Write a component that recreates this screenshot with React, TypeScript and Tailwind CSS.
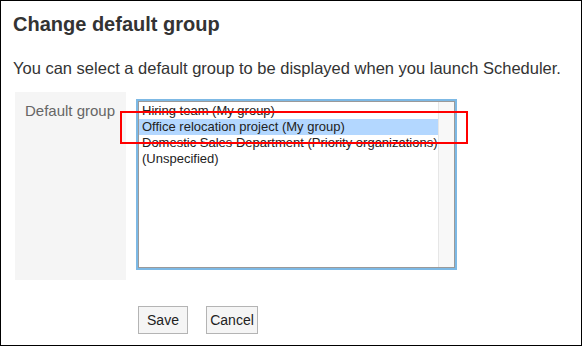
import React from "react";

const groups = [
  "Hiring team (My group)",
  "Office relocation project (My group)",
  "Domestic Sales Department (Priority organizations)",
  "(Unspecified)",
];

export default function App() {
  const selected = 1;

  return (
    <div
      className="relative h-[346px] w-[582px] border border-black bg-white text-[#333]"
      style={{ fontFamily: '"Liberation Sans", Arial, sans-serif' }}
    >
      <h1 className="pl-[12px] pt-[11px] text-[20px] font-bold leading-[24px] text-[#333]">
        Change default group
      </h1>
      <p className="mt-[23px] pl-[12px] text-[16.5px] leading-[18px] text-[#333]">
        You can select a default group to be displayed when you launch Scheduler.
      </p>

      <div className="mt-[15px] flex">
        <div className="ml-[14px] h-[188px] w-[111px] bg-[#f5f5f5] pl-[10px] pt-[10px] text-[15px] leading-[18px] text-[#666]">
          Default group
        </div>
        <div className="ml-[12px] pt-[9px]">
          <div className="flex h-[167px] w-[317px] border border-[#9a9a9a] shadow-[0_0_0_2px_#7db9e5]">
            <ul className="flex-1 pt-[1px] text-[13px] leading-[16px] text-[#222]">
              {groups.map((g, i) => (
                <li
                  key={g}
                  className={`whitespace-nowrap pl-[3px] ${i === selected ? "bg-[#b3d7ff]" : ""}`}
                >
                  {g}
                </li>
              ))}
            </ul>
            <div className="w-[16px] border-l border-[#e6e6e6] bg-[#f8f8f8]" />
          </div>
        </div>
      </div>

      <div className="mt-[26px] flex gap-[18px] pl-[137px]">
        <button
          type="button"
          className="h-[28px] w-[50px] border border-[#b4b4b4] bg-[#f5f5f5] text-[14px] text-[#222]"
        >
          Save
        </button>
        <button
          type="button"
          className="h-[28px] w-[52px] border border-[#b4b4b4] bg-[#f5f5f5] text-[14px] text-[#222]"
        >
          Cancel
        </button>
      </div>

      <div className="absolute left-[119px] top-[110px] h-[33px] w-[348px] border-2 border-[#ff0000]" />
    </div>
  );
}
